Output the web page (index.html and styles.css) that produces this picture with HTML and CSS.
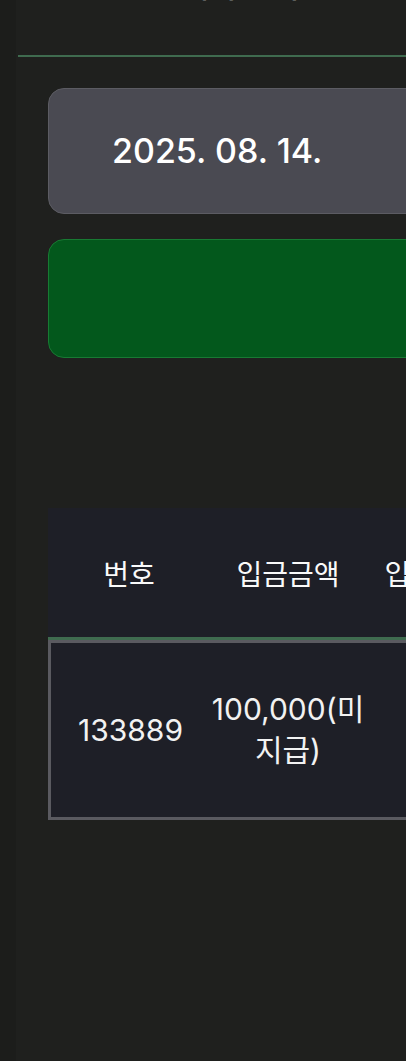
FILE: index.html
```html
<!DOCTYPE html>
<html lang="ko">
<head>
    <meta charset="UTF-8">
    <meta name="viewport" content="width=device-width, initial-scale=1.0">
    <title>입금 내역</title>
    <link rel="stylesheet" href="styles.css">
</head>
<body>
    <div class="page">
        <div class="header">
            <h2 class="title">입금 내역 조회</h2>
        </div>
        <div class="content">
            <div class="date-box">2025. 08. 14.</div>
            <button type="button" class="search-btn"></button>

            <table class="deposit-table">
                <thead>
                    <tr>
                        <th class="col-no">번호</th>
                        <th class="col-amount">입금금액</th>
                        <th class="col-date">입금일자</th>
                        <th class="col-etc">상태</th>
                    </tr>
                </thead>
                <tbody>
                    <tr>
                        <td>133889</td>
                        <td>100,000(미지급)</td>
                        <td></td>
                        <td></td>
                    </tr>
                </tbody>
            </table>
        </div>
    </div>
</body>
</html>
```

FILE: styles.css
```css
body {
    margin: 0;
    background-color: #1c1d1b;
    font-family: "Inter", "Noto Sans CJK KR", sans-serif;
    color: #fafafa;
    overflow: hidden;
    height: 1061px;
}
.page {
    margin-left: 16px;
    width: 800px;
    height: 1061px;
    padding-top: 1px;
    box-sizing: border-box;
    background-color: #1f201e;
    overflow: hidden;
}
.header {
    margin-left: 2px;
    border-bottom: 2px solid #3f6b4f;
    padding-bottom: 49px;
    margin-top: -35px;
}
.title {
    margin: 0;
    padding-left: 100px;
    font-size: 30px;
    line-height: 40px;
    font-weight: 500;
    color: #e8e8e8;
}
.content {
    padding-left: 32px;
    padding-top: 31px;
}
.date-box {
    width: 600px;
    height: 124px;
    box-sizing: content-box;
    background-color: #4a4a52;
    border: 1px solid #5c5c63;
    border-radius: 16px;
    padding-left: 63px;
    font-size: 34px;
    line-height: 124px;
    font-weight: 500;
    color: #ffffff;
}
.search-btn {
    display: block;
    margin-top: 25px;
    width: 664px;
    height: 119px;
    background-color: #03581c;
    border: 1px solid #187a33;
    border-radius: 16px;
    cursor: pointer;
}
.deposit-table {
    margin-top: 150px;
    table-layout: fixed;
    width: 600px;
    border-collapse: separate;
    border-spacing: 0;
    background-color: #1e1f27;
}
.deposit-table th {
    height: 132px;
    padding: 0;
    font-size: 28px;
    font-weight: 400;
    text-align: center;
    border-bottom: 3px solid #3f6b4f;
    box-sizing: border-box;
}
.deposit-table td {
    height: 180px;
    padding: 0;
    font-size: 30px;
    line-height: 41px;
    text-align: center;
    color: #f2f2f2;
    border-top: 3px solid #5a5a60;
    border-bottom: 3px solid #5a5a60;
    box-sizing: border-box;
}
.deposit-table td:first-child {
    border-left: 3px solid #5a5a60;
}
.col-no {
    width: 162px;
}
.col-amount {
    width: 156px;
}
.col-date {
    width: 140px;
}
```
